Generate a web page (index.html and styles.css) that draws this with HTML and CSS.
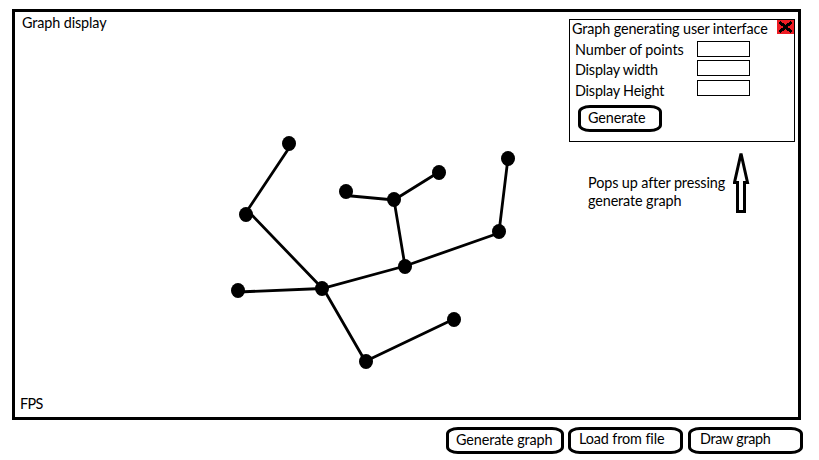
FILE: index.html
```html
<!DOCTYPE html>
<html lang="en">
<head>
<meta charset="utf-8">
<title>Graph display</title>
<link rel="stylesheet" href="styles.css">
</head>
<body>
<main class="display">
  <svg class="graph" viewBox="15 12 783 405" aria-hidden="true">
    <g class="edges">
      <path d="M289 148L247 211M248 211L322 288M238 292L322 288.500L405 266L499 233M346 195.500L394 200L439 172M394 200L405 266M499 232L508 158M323 288L364 359M366 361L454 319"/>
    </g>
    <g class="nodes">
      <ellipse cx="289" cy="143.500" rx="7" ry="7.500"/>
      <ellipse cx="246" cy="214.500" rx="7" ry="7.500"/>
      <ellipse cx="346" cy="191.500" rx="7" ry="7.500"/>
      <ellipse cx="394" cy="199.500" rx="7" ry="7.500"/>
      <ellipse cx="439" cy="172.500" rx="7" ry="7.500"/>
      <ellipse cx="508" cy="158.500" rx="7" ry="7.500"/>
      <ellipse cx="499" cy="231.500" rx="7" ry="7.500"/>
      <ellipse cx="405" cy="266.500" rx="7" ry="7.500"/>
      <ellipse cx="322" cy="288.500" rx="7" ry="7.500"/>
      <ellipse cx="238" cy="290.500" rx="7" ry="7.500"/>
      <ellipse cx="366" cy="361.500" rx="7" ry="7.500"/>
      <ellipse cx="454" cy="319.500" rx="7" ry="7.500"/>
    </g>
  </svg>
  <div class="status">
    <span class="title">Graph display</span>
    <span class="fps">FPS</span>
  </div>
  <aside class="side">
    <section class="panel">
      <header class="panel-head">
        <span class="panel-title">Graph generating user interface</span>
        <svg class="close" viewBox="0 0 17 14" shape-rendering="crispEdges"><path d="M2.500 2L14.500 12M14.500 2L2.500 12"/></svg>
      </header>
      <div class="fields">
        <label class="points" for="points">Number of points</label><input id="points">
        <label class="width" for="width">Display width</label><input id="width">
        <label class="height" for="height">Display Height</label><input id="height">
      </div>
      <button class="btn generate"><span>Generate</span></button>
    </section>
    <div class="note">
      <p><span class="note-a">Pops up after pressing</span><br><span class="note-b">generate graph</span></p>
      <svg class="arrow" viewBox="733 151 17 63"><path d="M741 153.500L734.500 182.500H737.500V211.500H744.500V182.500H747.500Z"/></svg>
    </div>
  </aside>
</main>
<footer class="actions">
  <button class="btn make"><span>Generate graph</span></button>
  <button class="btn load"><span>Load from file</span></button>
  <button class="btn draw"><span>Draw graph</span></button>
</footer>
</body>
</html>
```

FILE: styles.css
```css
* { box-sizing: border-box; }
body {
  margin: 0;
  padding: 9px 16px 0 12px;
  height: 460px;
  overflow: hidden;
  background: #fff;
  color: #000;
  font: 14.4px/18px Lato, "Noto Sans", sans-serif;
  letter-spacing: -0.12px;
  font-variant-ligatures: none;
}
span, label { white-space: nowrap; }
.display {
  position: relative;
  display: flex;
  justify-content: space-between;
  width: 789px;
  height: 411px;
  border: 3px solid #000;
}
.graph { position: absolute; inset: 0; width: 783px; height: 405px; }
.edges { fill: none; stroke: #000; stroke-width: 2.8; }
.status {
  display: flex;
  flex-direction: column;
  justify-content: space-between;
  padding: 2px 0 4px 7px;
}
.fps { margin-left: -2px; letter-spacing: -0.7px; }
.side { position: relative; width: 226px; margin: 7px 3px 0 0; }
.panel { height: 123px; border: 1px solid #000; }
.panel-head { display: flex; justify-content: space-between; height: 21px; padding-left: 2px; }
.close { width: 17px; height: 14px; background: #ed1c24; }
.close path { fill: none; stroke: #000; stroke-width: 3; }
.fields {
  display: grid;
  grid-template-columns: 122px 53px;
  grid-template-rows: 16px 16px 16px;
  row-gap: 4px;
  padding-left: 5px;
  height: 64px;
}
.fields input {
  width: 53px;
  height: 16px;
  padding: 0;
  border: 1px solid #000;
  border-radius: 0;
  background: #fff;
}
.fields input:nth-of-type(n+2) { margin-top: -1px; }
.width, .height { letter-spacing: -0.2px; }
.height { padding-top: 1px; }
.btn {
  display: block;
  height: 27px;
  padding: 0;
  border: 3px solid #000;
  border-radius: 12px / 7px;
  background: #fff;
  color: #000;
  font: inherit;
  letter-spacing: inherit;
  line-height: 18px;
  text-align: left;
}
.btn span { display: block; position: relative; top: -1px; }
.generate { width: 84px; margin-left: 8px; padding-left: 7px; }
.note { display: flex; justify-content: space-between; margin: 9px 45px 0 19px; }
.note p { margin: 23px 0 0; }
.arrow { width: 17px; height: 63px; flex: none; }
.arrow path { fill: #fff; stroke: #000; stroke-width: 3; }
.actions { display: flex; justify-content: flex-end; width: 791px; padding-top: 7px; }
.make { width: 118px; margin-right: 4px; padding: 1px 0 0 7px; }
.load { width: 115px; margin-right: 5px; padding: 0 0 1px 8px; }
.draw { width: 115px; padding: 0 0 1px 9px; letter-spacing: -0.3px; }
```
